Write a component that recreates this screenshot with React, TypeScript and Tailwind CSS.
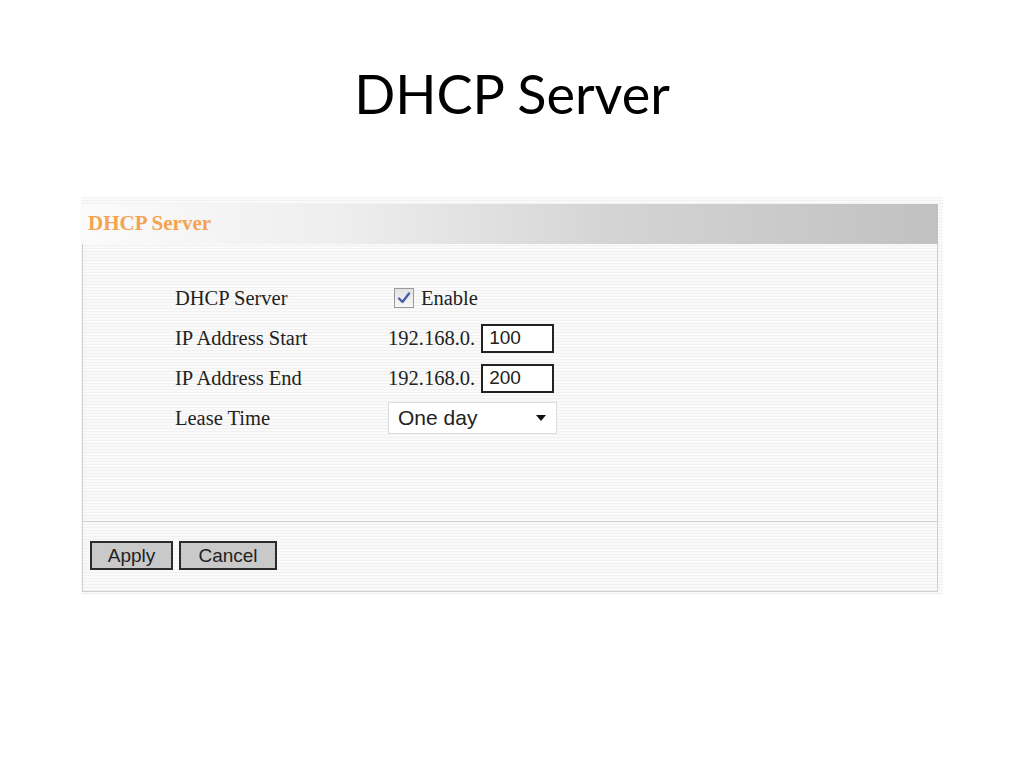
const serif = 'font-["Liberation_Serif","Times_New_Roman",serif]';

function Row({ label, children }: { label: string; children: React.ReactNode }) {
  return (
    <div className="flex h-[40px] items-center">
      <div className={`w-[213px] text-[20.5px] text-[#222] ${serif}`}>{label}</div>
      <div className="flex items-center">{children}</div>
    </div>
  );
}

function IpField({ value }: { value: string }) {
  return (
    <div className="flex items-center">
      <span className={`text-[20.5px] text-[#222] ${serif}`}>192.168.0.</span>
      <div className="ml-[6px] flex h-[29px] w-[73px] items-center border-2 border-[#222] bg-white px-[6px] font-['Liberation_Sans',Arial,sans-serif] text-[19px] text-[#222]">
        {value}
      </div>
    </div>
  );
}

export default function App() {
  return (
    <div className="h-[768px] w-[1024px] bg-white">
      <div className="flex h-[197px] justify-center pt-[59px]">
        <h1 className="font-['Lato','Open_Sans',sans-serif] text-[54px] leading-[70px] text-black">DHCP Server</h1>
      </div>

      <div className="ml-[81px] w-[862px] bg-[repeating-linear-gradient(to_bottom,#f1f1f1_0px,#f1f1f1_1px,#fafafa_1px,#fafafa_3px)] pb-[3px] pl-[1px] pr-[5px] pt-[7px]">
        <div className="flex h-[40px] items-center bg-[linear-gradient(to_right,#fbfbfb_0%,#eeeeee_30%,#d4d4d4_62%,#c1c1c1_100%)] pl-[6px]">
          <span className={`text-[21px] font-bold text-[#f4a352] ${serif}`}>DHCP Server</span>
        </div>

        <div className="border-x border-b border-[#cfcfcf]">
          <div className="h-[277px] pl-[92px] pt-[34px]">
            <Row label="DHCP Server">
              <div className="ml-[6px] flex items-center">
                <span className="flex h-[20px] w-[20px] items-center justify-center border border-[#9a9a9a] bg-[linear-gradient(to_bottom,#e2e2e2,#f8f8f8)]">
                  <svg width="16" height="16" viewBox="0 0 16 16">
                    <path d="M3 8.5 L6.5 12 L13 3.5" fill="none" stroke="#4a5ea8" strokeWidth="2.4" strokeLinecap="round" strokeLinejoin="round" />
                  </svg>
                </span>
                <span className={`ml-[7px] text-[20.5px] text-[#222] ${serif}`}>Enable</span>
              </div>
            </Row>
            <Row label="IP Address Start">
              <IpField value="100" />
            </Row>
            <Row label="IP Address End">
              <IpField value="200" />
            </Row>
            <Row label="Lease Time">
              <div className="flex h-[32px] w-[169px] items-center justify-between border border-[#dcdcdc] bg-white pl-[9px] pr-[10px] font-['Liberation_Sans',Arial,sans-serif] text-[21px] text-[#222]">
                <span>One day</span>
                <svg width="10" height="6" viewBox="0 0 10 6">
                  <path d="M0 0 L10 0 L5 6 Z" fill="#111" />
                </svg>
              </div>
            </Row>
          </div>

          <div className="flex h-[70px] gap-[6px] border-t border-[#cfcfcf] pl-[7px] pt-[19px]">
            <button className="h-[29px] w-[83px] border-2 border-[#2a2a2a] bg-[#c9c9c9] font-['Liberation_Sans',Arial,sans-serif] text-[19px] leading-none text-[#222]">
              Apply
            </button>
            <button className="h-[29px] w-[98px] border-2 border-[#2a2a2a] bg-[#c9c9c9] font-['Liberation_Sans',Arial,sans-serif] text-[19px] leading-none text-[#222]">
              Cancel
            </button>
          </div>
        </div>
      </div>
    </div>
  );
}
